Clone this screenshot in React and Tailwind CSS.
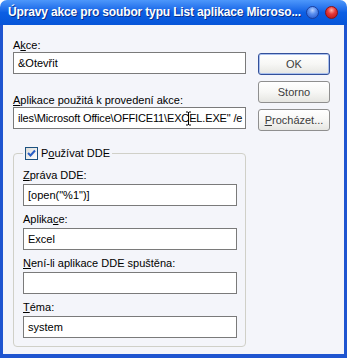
import React from 'react';

const U = ({ children }) => <span className="underline underline-offset-[1px]">{children}</span>;

const Field = ({ children, className = '' }) => (
  <div className={`relative h-[22px] border border-[#7a7a7a] bg-white pl-[4px] flex items-center whitespace-nowrap overflow-hidden ${className}`}>
    {children}
  </div>
);

const Button = ({ children, focused }) => (
  <button
    className={`h-[22px] w-[72px] rounded-[3px] border text-[11px] text-[#3c3c3c] bg-gradient-to-b from-white via-[#f7f7f5] to-[#e6e6e2] ${
      focused ? 'border-[#33509a] shadow-[inset_0_0_0_1px_#a9c0ee]' : 'border-[#8f8f8f]'
    }`}
  >
    {children}
  </button>
);

const Orb = ({ color }) => (
  <div
    className={`w-[13px] h-[13px] rounded-full border ${
      color === 'blue'
        ? 'border-[#1d3f9c] bg-[radial-gradient(circle_at_50%_30%,#b8d2ff_0%,#5a8ff0_40%,#1c4fc8_100%)]'
        : 'border-[#8e1111] bg-[radial-gradient(circle_at_50%_30%,#ffb3a8_0%,#e6393a_40%,#b10f12_100%)]'
    }`}
  />
);

export default function App() {
  return (
    <div className="w-[347px] h-[358px] flex flex-col font-['Liberation_Sans',Arial,sans-serif] text-[11px] leading-[13px] text-black bg-white">
      <div className="h-[25px] shrink-0 rounded-t-[7px] bg-gradient-to-b from-[#4d97fb] via-[#0c5fe4] to-[#0755d8] flex items-center pl-[8px] pr-[9px]">
        <span className="text-white font-bold text-[12px] tracking-[-0.15px] whitespace-nowrap [text-shadow:1px_1px_0_#0a2e8a]">
          Úpravy akce pro soubor typu List aplikace Microso...
        </span>
        <div className="ml-auto flex gap-[6px] items-center">
          <Orb color="blue" />
          <Orb color="red" />
        </div>
      </div>

      <div className="flex-1 flex bg-[#f4f5fa] border-x-[3px] border-b-[4px] border-[#1f55d0] pl-[10px] pt-[14px]">
        <div className="w-[233px] flex flex-col">
          <div className="h-[13px]">
            A<U>k</U>ce:
          </div>
          <Field>&amp;Otevřit</Field>

          <div className="h-[13px] mt-[20px]">
            <U>A</U>plikace použitá k provedení akce:
          </div>
          <Field className="tracking-[-0.15px]">
            iles\Microsoft Office\OFFICE11\EXCEL.EXE" /e
            <svg className="absolute left-[171px] top-[3px]" width="7" height="15" viewBox="0 0 7 15">
              <path d="M1 1h2M4 1h2M3.5 1v13M1 14h2M4 14h2" stroke="#000" strokeWidth="1" fill="none" />
            </svg>
          </Field>

          <fieldset className="mt-[18px] border border-[#d0d0c8] rounded-[4px] pl-[9px] pr-[8px] pt-[9px] pb-[8px]">
            <legend className="px-[2px] flex items-center gap-[3px] h-[13px]">
              <span className="w-[13px] h-[13px] border border-[#1c5180] bg-gradient-to-br from-[#dcdcd8] to-white flex items-center justify-center">
                <svg width="9" height="9" viewBox="0 0 9 9">
                  <path d="M1 4l2.5 2.5L8 1.5" stroke="#2a5fc6" strokeWidth="2" fill="none" />
                </svg>
              </span>
              <span>
                P<U>o</U>užívat DDE
              </span>
            </legend>

            <div className="h-[13px]">
              <U>Z</U>práva DDE:
            </div>
            <Field className="mt-[2px]">[open("%1")]</Field>

            <div className="h-[13px] mt-[7px]">
              Aplika<U>c</U>e:
            </div>
            <Field className="mt-[2px]">Excel</Field>

            <div className="h-[13px] mt-[7px]">
              <U>N</U>ení-li aplikace DDE spuštěna:
            </div>
            <Field className="mt-[2px]" />

            <div className="h-[13px] mt-[7px]">
              <U>T</U>éma:
            </div>
            <Field className="mt-[2px]">system</Field>
          </fieldset>
        </div>

        <div className="ml-[12px] pt-[14px] flex flex-col gap-[6px]">
          <Button focused>OK</Button>
          <Button>Storno</Button>
          <Button>
            <U>P</U>rocházet...
          </Button>
        </div>
      </div>
    </div>
  );
}
